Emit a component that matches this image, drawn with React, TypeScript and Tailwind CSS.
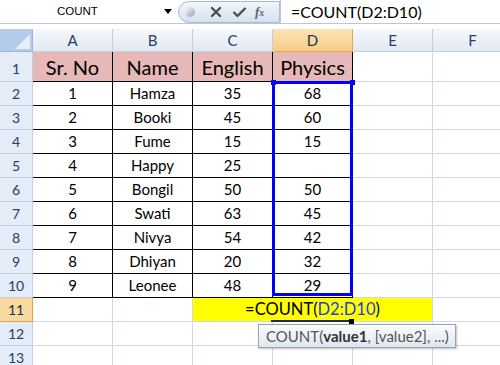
import React from 'react';

const cols = ['A', 'B', 'C', 'D', 'E', 'F'];

const rows: (string | number)[][] = [
  [1, 'Hamza', 35, 68],
  [2, 'Booki', 45, 60],
  [3, 'Fume', 15, 15],
  [4, 'Happy', 25, ''],
  [5, 'Bongil', 50, 50],
  [6, 'Swati', 63, 45],
  [7, 'Nivya', 54, 42],
  [8, 'Dhiyan', 20, 32],
  [9, 'Leonee', 48, 29],
];

const font = { fontFamily: 'Lato, "Noto Sans", sans-serif' };

function RowHeader({ n, active, tall }: { n: number; active?: boolean; tall?: boolean }) {
  return (
    <div
      className={`w-[33px] shrink-0 flex items-center justify-center border-r border-b text-[14px] ${
        tall ? 'h-[30px] items-end pb-[2px]' : 'h-[24px]'
      } ${active ? 'bg-[#f9d99e] border-[#f0a040] text-[#1f2f4a]' : 'bg-[#e4ecf7] border-[#c2cfe0] text-[#27406a]'}`}
    >
      {n}
    </div>
  );
}

export default function App() {
  return (
    <div className="relative w-[500px] h-[365px] overflow-hidden bg-white" style={font}>
      {/* formula bar */}
      <div className="flex h-[24px] border-b border-[#b7c7dc] bg-white">
        <div className="w-[178px] flex items-center relative">
          <span className="ml-[57px] text-[11.5px] text-black" style={{ fontFamily: '"Liberation Sans", sans-serif' }}>
            COUNT
          </span>
          <span className="absolute left-[164px] top-[9px] w-0 h-0 border-l-[4px] border-r-[4px] border-t-[5px] border-l-transparent border-r-transparent border-t-black" />
        </div>
        <div className="w-[102px] h-[22px] mt-[1px] flex items-center rounded-l-full border border-[#a9bbd3] bg-gradient-to-b from-[#f2f6fb] to-[#d6e0ee]">
          <span className="ml-[6px] w-[10px] h-[10px] rounded-full bg-gradient-to-br from-[#fafafa] to-[#9aa3ad]" />
          <svg className="ml-[15px]" width="12" height="12" viewBox="0 0 12 12">
            <path d="M2 2 L10 10 M10 2 L2 10" stroke="#4a4f57" strokeWidth="2.4" strokeLinecap="round" />
          </svg>
          <svg className="ml-[10px]" width="15" height="12" viewBox="0 0 15 12">
            <path d="M1.5 6 L5.5 10 L13.5 2" stroke="#4a4f57" strokeWidth="2.4" fill="none" strokeLinejoin="round" />
          </svg>
          <span className="ml-[8px] text-[13px] italic font-bold text-[#5a6270]" style={{ fontFamily: '"Liberation Serif", serif' }}>
            f<span className="text-[10px]">x</span>
          </span>
        </div>
        <div className="flex-1 border-l border-[#b7c7dc] flex items-center pl-[10px] text-[16px] text-black">
          =COUNT(D2:D10)
        </div>
      </div>

      <div className="h-[5px]" />

      {/* column headers */}
      <div className="flex h-[23px]">
        <div className="w-[33px] shrink-0 relative bg-[#b4cbe9] border-r border-b border-[#9fb6d4]">
          <svg className="absolute right-[2px] bottom-[2px]" width="15" height="15" viewBox="0 0 15 15">
            <path d="M15 0 L15 15 L0 15 Z" fill="#e8eef7" />
          </svg>
        </div>
        {cols.map((c) => (
          <div
            key={c}
            className={`w-[80px] shrink-0 flex items-center justify-center border-r border-b text-[15px] ${
              c === 'D'
                ? 'bg-gradient-to-b from-[#fbe3b6] to-[#f6cf86] border-[#f1a24c] text-[#2a3344]'
                : 'bg-gradient-to-b from-[#f5f8fc] to-[#e2e9f3] border-[#c2cfe0] text-[#27406a]'
            }`}
          >
            {c}
          </div>
        ))}
      </div>

      {/* row 1 */}
      <div className="flex">
        <RowHeader n={1} tall />
        {['Sr. No', 'Name', 'English', 'Physics'].map((h) => (
          <div
            key={h}
            className="w-[80px] h-[30px] shrink-0 flex items-end justify-center pb-[1px] bg-[#e6b8b7] border-r border-b border-black text-[20px] text-black leading-none"
          >
            <span className="mb-[3px]">{h}</span>
          </div>
        ))}
        <div className="w-[80px] h-[30px] shrink-0 border-r border-b border-[#d0d7e5]" />
        <div className="w-[80px] h-[30px] shrink-0 border-b border-[#d0d7e5]" />
      </div>

      {/* data rows */}
      {rows.map((r, i) => (
        <div key={i} className="flex">
          <RowHeader n={i + 2} />
          {r.map((v, j) => (
            <div
              key={j}
              className="w-[80px] h-[24px] shrink-0 flex items-center justify-center border-r border-b border-black text-[15px] text-black"
            >
              {v}
            </div>
          ))}
          <div className="w-[80px] h-[24px] shrink-0 border-r border-b border-[#d0d7e5]" />
          <div className="w-[80px] h-[24px] shrink-0 border-b border-[#d0d7e5]" />
        </div>
      ))}

      {/* row 11 */}
      <div className="flex">
        <RowHeader n={11} active />
        <div className="w-[80px] h-[24px] shrink-0 border-r border-b border-[#d0d7e5]" />
        <div className="w-[80px] h-[24px] shrink-0 border-r border-b border-[#d0d7e5]" />
        <div className="w-[240px] h-[24px] shrink-0 flex items-center justify-center bg-[#ffff00] border-r border-b border-[#d0d7e5] text-[16.5px] text-black">
          =COUNT(<span className="text-[#1f3fd8]">D2:D10</span>)
        </div>
        <div className="w-[80px] h-[24px] shrink-0 border-b border-[#d0d7e5]" />
      </div>

      {[12, 13].map((n) => (
        <div key={n} className="flex">
          <RowHeader n={n} />
          {cols.map((c) => (
            <div key={c} className="w-[80px] h-[24px] shrink-0 border-r border-b border-[#d0d7e5]" />
          ))}
        </div>
      ))}

      {/* selection D2:D10 */}
      <div className="absolute left-[272px] top-[81px] w-[81px] h-[215px] border-[3px] border-[#0000ff] pointer-events-none" />
      <div className="absolute left-[271px] top-[80px] w-[5px] h-[5px] bg-[#0000ff]" />
      <div className="absolute left-[350px] top-[80px] w-[5px] h-[5px] bg-[#0000ff]" />

      {/* active cell bottom edge */}
      <div className="absolute left-[271px] top-[320px] w-[78px] h-[2px] bg-[#1a2a66]" />
      <div className="absolute left-[349px] top-[319px] w-[5px] h-[5px] bg-black" />

      {/* tooltip */}
      <div className="absolute left-[258px] top-[324px] w-[198px] h-[24px] flex items-center pl-[7px] border border-[#9aa3ad] bg-gradient-to-b from-[#fbfcfe] to-[#dfe6f0] shadow-[1px_1px_2px_rgba(0,0,0,0.25)] text-[15px] text-[#555]">
        COUNT(<span className="font-bold text-[#333]">value1</span>, [value2], ...)
      </div>
    </div>
  );
}
